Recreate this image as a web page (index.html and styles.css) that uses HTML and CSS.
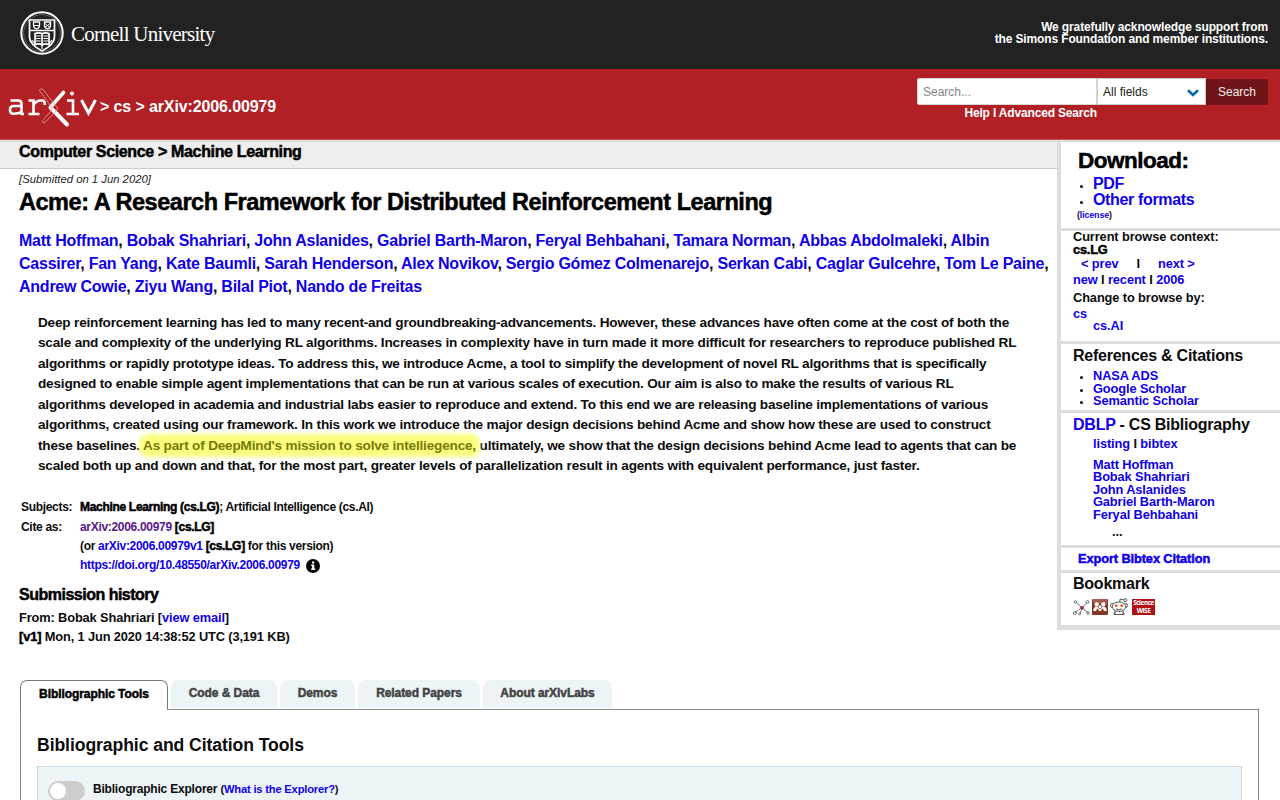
FILE: index.html
```html
<!DOCTYPE html>
<html lang="en">
<head>
<meta charset="utf-8">
<title>[2006.00979] Acme: A Research Framework for Distributed Reinforcement Learning</title>
<link rel="stylesheet" href="styles.css">
</head>
<body>
<header class="cu-bar">
  <div class="cornell">
    <svg class="seal" viewBox="0 0 44 44" width="44" height="44" fill="none" stroke="#fff">
      <circle cx="22" cy="22" r="20.7" stroke-width="2"/>
      <circle cx="22" cy="22" r="18.4" stroke="#777" stroke-width=".7"/>
      <path d="M9.500 9h25v17c0 6-5 10-12.500 14C14.500 36 9.500 32 9.500 26z" stroke-width="1.7"/>
      <path d="M10 19.500h24" stroke-width="1.500"/>
      <path d="M13.500 11v3.500c0 2 1.500 3 3 3.500 1.500-.5 3-1.500 3-3.500v-3.500zM24.500 11v3.500c0 2 1.500 3 3 3.500 1.500-.5 3-1.500 3-3.500v-3.500z" stroke-width="1.300"/>
      <path d="M14 14.500h5M25 12.500l5 4M30 12.500l-5 4" stroke-width="1"/>
      <path d="M22 22.500v11M15 22.500c3-1 5.500-.5 7 0 1.500-.5 4-1 7 0v11c-3-1-5.500-.5-7 .5-1.500-1-4-1.500-7-.5z" stroke-width="1.700"/>
      <path d="M16 25h4.500M16 27.500h4.500M16 30h4.500M23.500 25H28M23.500 27.500H28M23.500 30H28M22 34v4M12 29l3 4M32 29l-3 4" stroke-width="1.200"/>
    </svg>
    <span class="cornell-name">Cornell University</span>
  </div>
  <div class="support">We gratefully acknowledge support from<br>the Simons Foundation and member institutions.</div>
</header>
<div class="arxiv-bar">
  <div class="crumbs">
    <svg class="arxiv-logo" viewBox="0 0 90 42" width="90" height="42" fill="none" stroke="#fff" stroke-linecap="round">
      <g stroke-width="2.600" stroke-linecap="butt">
        <path d="M2.500 14.500H10q3.500 0 3.500 3.200V29M13.500 20H5.500q-3.500 0-3.500 3.700 0 4 3.500 4 5 0 8-1.500M12.500 28H16"/>
        <path d="M20.500 14.500h5V28M20.500 28h11M25.500 19q3-4.500 7-4.500h2.500q1.800.5 1.800 4.500"/>
        <path d="M59 14.500h6V28M58.500 28h12.500" />
        <path d="M73.500 14L80.500 27 87.500 14" stroke-width="3"/>
      </g>
      <circle cx="64" cy="7.500" r="2" fill="#fff" stroke="none"/>
      <path d="M55.500 6.500L43.500 20" stroke-width="3.600"/>
      <path d="M42.500 21.500L59 38.500" stroke-width="4"/>
      <path d="M31.500 4Q32.500 1.500 35 3.500L46.500 18.500 50 22 48 25 37 36.500Q34.500 38 34.500 35L44.500 23zM41 19l3.500 3.500" stroke="#e9a5a7" stroke-width=".8"/>
    </svg>
    <span class="trail">&gt; cs &gt; arXiv:2006.00979</span>
  </div>
  <form class="search">
    <div class="search-row">
      <div class="field">Search...</div>
      <div class="select"><span>All fields</span><svg width="12" height="8" viewBox="0 0 12 8" fill="none" stroke="#0068ac" stroke-width="2.600"><path d="M1 1.200L6 6l5-4.800"/></svg></div>
      <div class="go">Search</div>
    </div>
    <div class="help">Help I Advanced Search</div>
  </form>
</div>
<div class="page">
  <main class="main">
    <div class="subject-bar heavy"><span class="crumb">Computer Science &gt; Machine Learning</span></div>
    <div class="submitted">[Submitted on 1 Jun 2020]</div>
    <h1 class="title heavy">Acme: A Research Framework for Distributed Reinforcement Learning</h1>
    <div class="authors"><a>Matt Hoffman</a>, <a>Bobak Shahriari</a>, <a>John Aslanides</a>, <a>Gabriel Barth-Maron</a>, <a>Feryal Behbahani</a>, <a>Tamara Norman</a>, <a>Abbas Abdolmaleki</a>, <a>Albin</a><br><a>Cassirer</a>, <a>Fan Yang</a>, <a>Kate Baumli</a>, <a>Sarah Henderson</a>, <a>Alex Novikov</a>, <a>Sergio Gómez Colmenarejo</a>, <a>Serkan Cabi</a>, <a>Caglar Gulcehre</a>, <a>Tom Le Paine</a>,<br><a>Andrew Cowie</a>, <a>Ziyu Wang</a>, <a>Bilal Piot</a>, <a>Nando de Freitas</a></div>
    <div class="abstract">Deep reinforcement learning has led to many recent-and groundbreaking-advancements. However, these advances have often come at the cost of both the<br>scale and complexity of the underlying RL algorithms. Increases in complexity have in turn made it more difficult for researchers to reproduce published RL<br>algorithms or rapidly prototype ideas. To address this, we introduce Acme, a tool to simplify the development of novel RL algorithms that is specifically<br>designed to enable simple agent implementations that can be run at various scales of execution. Our aim is also to make the results of various RL<br>algorithms developed in academia and industrial labs easier to reproduce and extend. To this end we are releasing baseline implementations of various<br>algorithms, created using our framework. In this work we introduce the major design decisions behind Acme and show how these are used to construct<br>these baselines. <span class="mark">As part of DeepMind's mission to solve intelliegence,</span> ultimately, we show that the design decisions behind Acme lead to agents that can be<br>scaled both up and down and that, for the most part, greater levels of parallelization result in agents with equivalent performance, just faster.</div>
    <div class="meta">
      <span>Subjects:</span><span><b class="heavy">Machine Learning (cs.LG)</b>; Artificial Intelligence (cs.AI)</span>
      <span>Cite as:</span><span><a class="visited">arXiv:2006.00979</a> <b class="heavy">[cs.LG]</b></span>
      <span></span><span>(or <a>arXiv:2006.00979v1</a> <b class="heavy">[cs.LG]</b> for this version)</span>
      <span></span><span class="doi"><a>https://doi.org/10.48550/arXiv.2006.00979</a><svg class="info" width="14" height="14" viewBox="0 0 14 14"><circle cx="7" cy="7" r="7"/><path d="M6 2.500h2.300v2H6zM5.200 5.600h3.100v4h1v1.500H5.200V9.600h.9V7.100h-.9z" fill="#fff"/></svg></span>
    </div>
    <div class="history">
      <h2 class="heavy">Submission history</h2>
      <div>From: Bobak Shahriari [<a>view email</a>]</div>
      <div><b class="heavy">[v1]</b> Mon, 1 Jun 2020 14:38:52 UTC (3,191 KB)</div>
    </div>
  </main>
  <aside class="side">
    <section class="download">
      <h2 class="heavy">Download:</h2>
      <ul><li><a>PDF</a></li><li><a>Other formats</a></li></ul>
      <div class="license">(<a>license</a>)</div>
    </section>
    <section class="browse">
      <div>Current browse context:</div>
      <div class="heavy lg">cs.LG</div>
      <div class="prevnext"><a>&lt; prev</a><span>I</span><a>next &gt;</a></div>
      <div class="recent"><a>new</a> I <a>recent</a> I <a>2006</a></div>
      <div class="change">Change to browse by:</div>
      <div class="cs"><a>cs</a></div>
      <div class="indent"><a>cs.AI</a></div>
    </section>
    <section class="refs">
      <h3>References &amp; Citations</h3>
      <ul><li><a>NASA ADS</a></li><li><a>Google Scholar</a></li><li><a>Semantic Scholar</a></li></ul>
    </section>
    <section class="dblp">
      <h3><a>DBLP</a> - CS Bibliography</h3>
      <div class="indent listing"><a>listing</a> I <a>bibtex</a></div>
      <div class="indent"><a>Matt Hoffman</a></div>
      <div class="indent"><a>Bobak Shahriari</a></div>
      <div class="indent"><a>John Aslanides</a></div>
      <div class="indent"><a>Gabriel Barth-Maron</a></div>
      <div class="indent"><a>Feryal Behbahani</a></div>
      <div class="dots">...</div>
    </section>
    <section class="export heavy"><a>Export Bibtex Citation</a></section>
    <section class="bookmark">
      <h3>Bookmark</h3>
      <div class="icons">
        <svg width="17" height="17" viewBox="0 0 17 17" fill="none" stroke="#777" stroke-width="1"><path d="M3 3.500l6 5 5-5M9 8.500L2 13.500M9 8.500l6 5M9 9l-2 6"/><circle cx="2.500" cy="3" r="1.300"/><circle cx="14.500" cy="3" r="1.500"/><circle cx="2" cy="14" r="1.500"/><circle cx="15" cy="14" r="1.300"/><circle cx="6.500" cy="14.800" r="1"/><circle cx="9" cy="8.800" r="1.500" fill="#a34" stroke="#a34"/></svg>
        <svg width="16" height="16" viewBox="0 0 16 16"><rect width="16" height="16" rx="1" fill="#853725"/><path d="M1 0h14v5L1 4z" fill="#a65d4b"/><g fill="#fff"><circle cx="4.700" cy="5.500" r="2.200"/><circle cx="11.300" cy="5.500" r="2.200"/><path d="M1.300 12c0-2.500.8-4 2.500-4h8.400c1.700 0 2.500 1.500 2.500 4h-3c0-1.500-.4-2.300-1.200-2.300-1 0-.8 2.300-2.500 2.300s-1.500-2.300-2.500-2.300c-.8 0-1.200.8-1.200 2.300z"/></g><circle cx="8" cy="7.800" r="1.900" fill="#fff" stroke="#853725" stroke-width=".7"/></svg>
        <svg width="18" height="18" viewBox="0 0 18 18" fill="#fff" stroke="#555" stroke-width="1"><path d="M9.500 5l.7-4 4 1"/><circle cx="15.200" cy="2.200" r="1.500"/><circle cx="2.500" cy="7.500" r="2"/><circle cx="15.500" cy="7.500" r="2"/><path d="M5 12v4.500h8V12M5 14q-2 1.500-1 2.500h3M13 14q2 1.500 1 2.500h-3"/><ellipse cx="9" cy="8.700" rx="6.700" ry="4.700"/><path d="M6 10.800q3 2 6 0" fill="none"/><g fill="#f43e10" stroke="none"><circle cx="6.300" cy="7.800" r="1.300"/><circle cx="11.700" cy="7.800" r="1.300"/></g></svg>
        <div class="sciwise"><span>Science</span><span>WISE</span></div>
      </div>
    </section>
  </aside>
</div>
<section class="labs">
  <div class="tabs heavy">
    <div class="tab active">Bibliographic Tools</div><div class="tab t2">Code &amp; Data</div><div class="tab t3">Demos</div><div class="tab t4">Related Papers</div><div class="tab t5">About arXivLabs</div>
  </div>
  <div class="panel">
    <h2>Bibliographic and Citation Tools</h2>
    <div class="tool"><span class="toggle"></span><span class="tool-name">Bibliographic Explorer <span>(<a>What is the Explorer?</a>)</span></span></div>
  </div>
</section>
</body>
</html>
```

FILE: styles.css
```css
* { box-sizing: border-box; }
html, body { margin: 0; height: 800px; overflow: hidden; }
body { background: #fff; color: #0c0c0c; font: bold 12.8px/12.6px "Liberation Sans", Arial, sans-serif; white-space: nowrap; }
h1, h2, h3, ul { margin: 0; padding: 0; }
a { color: #1000e8; text-decoration: none; }
a.visited { color: #551a8b; }
.heavy { color: #000; -webkit-text-stroke: .5px currentColor; }

.cu-bar { height: 69px; background: #222; display: flex; justify-content: space-between; padding: 11px 12px 0 20px; color: #fff; }
.cornell { display: flex; gap: 7px; }
.cornell-name { font: 21px/46px "Liberation Serif", serif; letter-spacing: -.75px; }
.support { padding-top: 10px; text-align: right; font-size: 12px; line-height: 12px; letter-spacing: -.13px; }
.arxiv-bar { height: 71px; background: #b02024; border-bottom: 1px solid #c25356; display: flex; justify-content: space-between; padding: 0 12px 0 8px; color: #fff; }
.crumbs { display: flex; gap: 2px; padding-top: 17px; }
.trail { font-size: 16px; line-height: 41px; letter-spacing: -.12px; }
.search { padding-top: 9px; margin: 0; }
.search-row { display: flex; height: 27px; font-weight: normal; font-size: 12px; line-height: 27px; }
.field { width: 180px; padding-left: 5px; color: #858585; background: #fff; border: 1px solid #d8d8d8; line-height: 26px; border-radius: 2px 0 0 2px; }
.select { width: 109px; background: #fff; color: #222; border: 1px solid #ccc; display: flex; align-items: center; justify-content: space-between; padding: 2px 6px 0 5px; }
.go { width: 62px; margin-top: 1px; height: 26px; background: #701417; text-align: center; color: #eee; border-radius: 0 2px 2px 0; }
.help { width: 180px; text-align: right; font-size: 12px; line-height: 17px; letter-spacing: -.17px; }

.page { display: flex; height: 540px; }
.main { width: 1057px; border-top: 2px solid #ddd; }
.subject-bar { height: 27px; background: #eee; border-bottom: 1px solid #ccc; padding-left: 19px; font-size: 16px; line-height: 20px; letter-spacing: -.35px; }
.submitted { padding: 4px 0 0 19px; font: italic 11.3px/13px "Liberation Sans", sans-serif; color: #222; }
.title { padding-left: 19px; margin-top: 2px; font-size: 23.500px; line-height: 28px; letter-spacing: -.46px; }
.authors { padding: 13px 0 0 19px; font-size: 16px; line-height: 23.2px; letter-spacing: -.24px; }
.abstract { padding: 14px 0 0 38px; font-size: 13.6px; line-height: 20.48px; letter-spacing: -.193px; }
.mark { position: relative; color: #777a08; background: #faff7d; box-shadow: 0 0 4px 4px #faff7d; border-radius: 5px; }
.meta { display: grid; grid-template-columns: 59px auto; grid-auto-rows: 19.200px; padding: 22px 0 0 21px; font-size: 12px; line-height: 19px; letter-spacing: -.31px; }
.doi { display: flex; gap: 6px; }
.info { margin-top: 3px; }
.history { padding: 10px 0 0 19px; line-height: 18.500px; letter-spacing: -.12px; }
.history h2 { font-size: 16px; line-height: 20px; margin-bottom: 4px; letter-spacing: -.5px; }

.side { width: 223px; height: 490px; border-left: 4px solid #ddd; border-top: 2px solid #ddd; border-bottom: 5px solid #ddd; letter-spacing: -.1px; }
.side section { border-bottom: 3px solid #ddd; padding-left: 12px; }
.side ul { padding-left: 20px; }
.side h3 { font-size: 16px; line-height: 18px; letter-spacing: -.24px; }
.side .indent { padding-left: 20px; }
.side .download { height: 89px; }
.download h2 { padding: 4px 0 0 5px; font-size: 22.500px; line-height: 29px; height: 32px; letter-spacing: -.5px; }
.download ul { font-size: 16px; line-height: 16px; padding-top: 2px; letter-spacing: -.35px; }
.download .license { padding-left: 4px; margin-top: 1px; font-size: 8.800px; }
.side .browse { height: 113px; }
.lg { letter-spacing: -.2px; }
.prevnext { display: flex; gap: 18px; padding-left: 8px; margin-top: 2px; }
.recent { margin-top: 3px; }
.change { margin-top: 6px; }
.cs { margin-top: 3px; }
.side .browse .indent { margin-top: -1px; }
.side .refs { height: 69px; padding-top: 3px; }
.refs ul { margin-top: 5px; }
.side li::marker { color: #111; font-size: 11px; }
.side .dblp { height: 135px; padding-top: 3px; }
.dblp .listing { margin: 4px 0 8px; }
.dots { padding-left: 39px; margin-top: 4px; }
.side .export { height: 25px; padding: 5px 0 0 17px; }
.side .bookmark { border: 0; padding-top: 2px; }
.icons { display: flex; gap: 2px; margin-top: 5px; height: 18px; align-items: center; }
.sciwise { width: 23px; height: 16px; margin-left: 2px; background: #b01117; color: #fff; display: grid; justify-items: center; font: bold 6.500px/8px "Open Sans", sans-serif; letter-spacing: -.5px; }

.labs { padding: 0 21px 0 20px; }
.tabs { display: flex; gap: 3px; height: 30px; position: relative; font-size: 12px; line-height: 27px; letter-spacing: -.07px; }
.tab { height: 29px; border-radius: 7px 7px 0 0; background: #ecf4f8; color: #444; text-align: center; border-bottom: 1px solid #fff; }
.tab.active { width: 148px; height: 30px; background: #fff; color: #000; border: 1px solid #777; border-bottom: 0; }
.t2 { width: 106px; }
.t3 { width: 75px; }
.t4 { width: 122px; }
.t5 { width: 129px; }
.panel { height: 110px; margin-top: -1px; border: 1px solid #888; padding: 23px 16px 0; }
.panel h2 { font-size: 17.600px; line-height: 24px; letter-spacing: -.08px; }
.tool { margin-top: 9px; height: 60px; background: #ecf4f8; border: 1px dotted #b5c5cc; padding: 14px 0 0 10px; display: flex; gap: 8px; font-size: 12px; line-height: 17px; letter-spacing: -.2px; }
.toggle { width: 37px; height: 20px; border-radius: 10px; background: #ccc; padding: 2px; }
.toggle::before { content: ""; display: block; width: 16px; height: 16px; border-radius: 50%; background: #fff; }
.tool-name span { font-size: 11.200px; }
```
